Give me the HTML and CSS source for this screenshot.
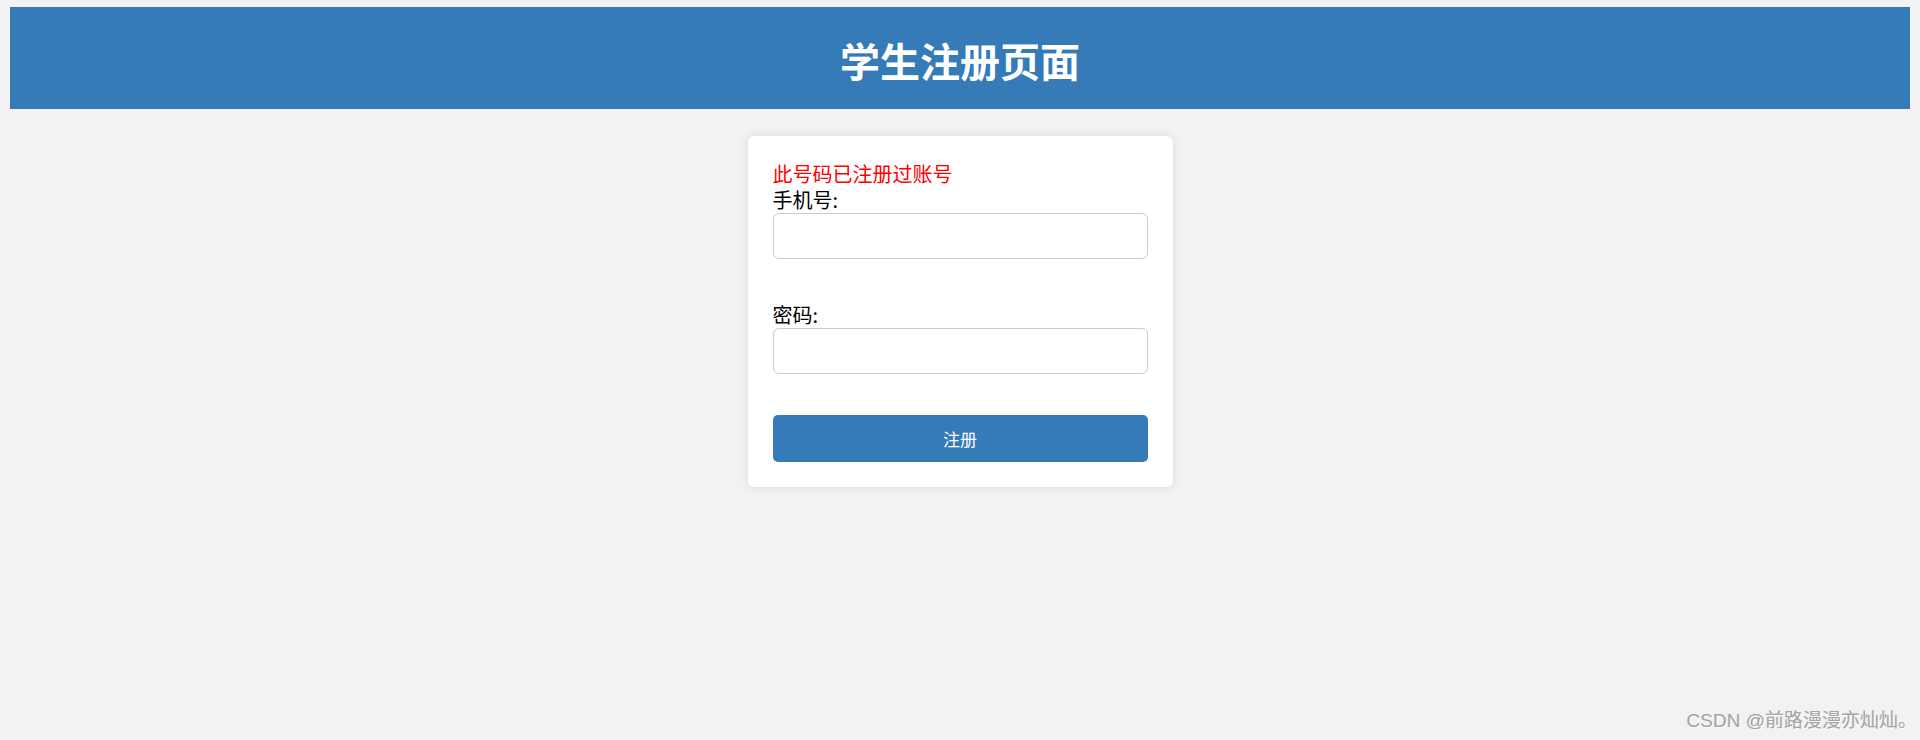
FILE: index.html
```html
<!DOCTYPE html>
<html lang="zh-CN">
<head>
<meta charset="utf-8">
<title>学生注册页面</title>
<link rel="stylesheet" href="styles.css">
</head>
<body>
<div class="page">
  <header class="header">
    <h1 class="title">学生注册页面</h1>
  </header>
  <form class="card">
    <div class="error">此号码已注册过账号</div>
    <div class="group">
      <label class="label">手机号:</label>
      <input class="field" type="text">
    </div>
    <div class="group group-last">
      <label class="label">密码:</label>
      <input class="field" type="password">
    </div>
    <button class="submit" type="button">注册</button>
  </form>
</div>
<div class="watermark">CSDN @前路漫漫亦灿灿。</div>
</body>
</html>
```

FILE: styles.css
```css
html, body {
  margin: 0;
  padding: 0;
  background: #f2f2f2;
  font-family: "Noto Sans CJK SC", "Noto Sans", sans-serif;
  height: 100%;
  overflow: hidden;
}

.page {
  padding: 7px 10px 0;
}

.header {
  background: #357bb7;
  height: 102px;
  display: flex;
  align-items: center;
  justify-content: center;
}

.title {
  margin: 0;
  color: #ffffff;
  font-size: 40px;
  font-weight: 700;
  line-height: 1;
  position: relative;
  top: 2px;
}

.card {
  width: 375px;
  margin: 27px auto 0;
  padding: 25px 25px 25px;
  background: #ffffff;
  border-radius: 6px;
  box-shadow: 0 0 10px rgba(0, 0, 0, 0.1);
  display: flex;
  flex-direction: column;
}

.error {
  color: #ff0000;
  font-size: 20px;
  line-height: 26px;
}

.group {
  display: flex;
  flex-direction: column;
  margin-bottom: 43px;
}

.group-last {
  margin-bottom: 41px;
}

.label {
  color: #000000;
  font-size: 20px;
  line-height: 26px;
}

.field {
  box-sizing: border-box;
  width: 100%;
  height: 46px;
  margin: 0;
  border: 1px solid #cccccc;
  border-radius: 6px;
  background: #ffffff;
  font-size: 17px;
  padding: 0 12px;
  outline: none;
}

.submit {
  box-sizing: border-box;
  width: 100%;
  height: 47px;
  margin: 0;
  border: none;
  border-radius: 5px;
  background: #357bb7;
  color: #ffffff;
  font-family: "Noto Sans CJK SC", "Noto Sans", sans-serif;
  font-size: 17px;
  cursor: pointer;
}

.watermark {
  position: absolute;
  right: 3px;
  bottom: 7px;
  color: #a6a6a6;
  font-size: 19px;
  line-height: 24px;
  text-shadow: 1px 1px 1px rgba(255, 255, 255, 0.8), -0.5px -0.5px 0 rgba(0, 0, 0, 0.15);
  font-family: "Liberation Sans", "Noto Sans CJK SC", sans-serif;
}
```
